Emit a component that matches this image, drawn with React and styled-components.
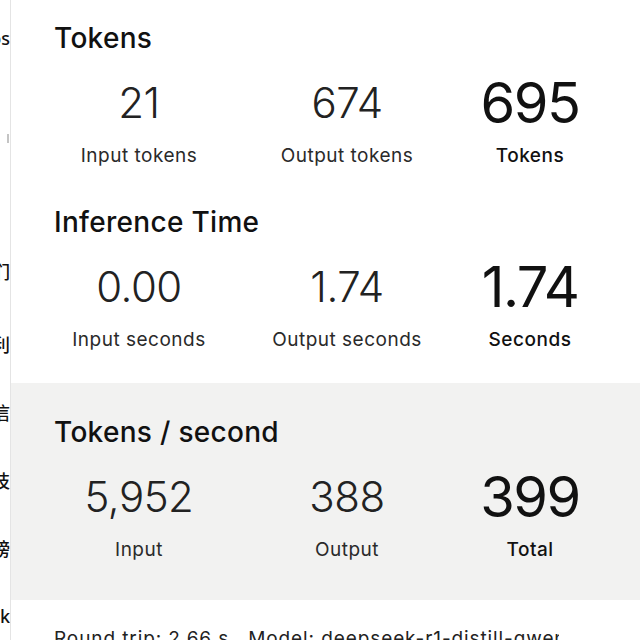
import React from 'react';
import styled, { createGlobalStyle } from 'styled-components';

const sections = [
  {
    title: 'Tokens',
    stats: [
      { value: '21', label: 'Input tokens' },
      { value: '674', label: 'Output tokens' },
      { value: '695', label: 'Tokens', total: true },
    ],
  },
  {
    title: 'Inference Time',
    stats: [
      { value: '0.00', label: 'Input seconds' },
      { value: '1.74', label: 'Output seconds' },
      { value: '1.74', label: 'Seconds', total: true },
    ],
  },
  {
    title: 'Tokens / second',
    shaded: true,
    stats: [
      { value: '5,952', label: 'Input' },
      { value: '388', label: 'Output' },
      { value: '399', label: 'Total', total: true },
    ],
  },
];

const navItems = [
  { text: 'Demos', gap: 28 },
  { text: '我们', gap: 119 },
  { text: '福利', gap: 53 },
  { text: '通信', gap: 48 },
  { text: '科技', gap: 48 },
  { text: '排行榜', gap: 48 },
  { text: 'Talk', gap: 47 },
];

function App() {
  return (
    <>
      <GlobalStyle />
      <Page>
        <Sidebar>
          <NavItem gap={navItems[0].gap}>{navItems[0].text}</NavItem>
          <NavMark />
          {navItems.slice(1).map((item) => (
            <NavItem key={item.text} gap={item.gap}>
              {item.text}
            </NavItem>
          ))}
        </Sidebar>
        <Panel>
          {sections.map((section) => (
            <Section key={section.title} shaded={section.shaded}>
              <Title>{section.title}</Title>
              <Stats>
                {section.stats.map((stat) => (
                  <Stat key={stat.label}>
                    <Value total={stat.total}>{stat.value}</Value>
                    <Label total={stat.total}>{stat.label}</Label>
                  </Stat>
                ))}
              </Stats>
            </Section>
          ))}
          <Footer>
            <span>Round trip: 2.66 s</span>
            <ModelName>Model: deepseek-r1-distill-qwen-7b</ModelName>
          </Footer>
        </Panel>
      </Page>
    </>
  );
}

const GlobalStyle = createGlobalStyle`
  html, body {
    margin: 0;
    padding: 0;
    background: #fff;
  }

  body {
    font-family: Inter, "Noto Sans", "Noto Sans CJK SC", sans-serif;
    color: #111;
    overflow: hidden;
  }
`;

const Page = styled.div`
  display: flex;
  height: 640px;
  overflow: hidden;
`;

const Sidebar = styled.nav`
  flex: 0 0 10px;
  display: flex;
  flex-direction: column;
  overflow: hidden;
  border-right: 1px solid #e4e4e4;
  font-family: "Noto Sans", "Noto Sans CJK SC", sans-serif;
  font-size: 18px;
  font-weight: 500;
  color: #111;
`;

const NavItem = styled.div`
  display: flex;
  justify-content: flex-end;
  height: 20px;
  line-height: 20px;
  margin-top: ${(p) => p.gap}px;
  white-space: nowrap;
`;

const NavMark = styled.div`
  align-self: flex-end;
  width: 2px;
  height: 9px;
  margin: 86px 1px 0 0;
  background: #c4c4c4;
`;

const Panel = styled.main`
  flex: 1;
  display: flex;
  flex-direction: column;
  min-width: 0;
`;

const Section = styled.section`
  padding: ${(p) => (p.shaded ? '32px 0 38px 43px' : '21px 0 16px 43px')};
  margin-top: ${(p) => (p.shaded ? '15px' : '0')};
  background: ${(p) => (p.shaded ? '#f2f2f1' : 'transparent')};
`;

const Title = styled.h2`
  margin: 0;
  font-size: 28px;
  line-height: 34px;
  font-weight: 500;
  letter-spacing: 0.3px;
  color: #111;
`;

const Stats = styled.div`
  display: grid;
  grid-template-columns: 170px 170px 120px;
  column-gap: 38px;
  margin-top: 23px;
`;

const Stat = styled.div`
  display: flex;
  flex-direction: column;
  align-items: center;
  gap: 16px;
`;

const Value = styled.div`
  height: 50px;
  line-height: 50px;
  font-size: ${(p) => (p.total ? '56px' : '42px')};
  font-weight: ${(p) => (p.total ? 400 : 300)};
  letter-spacing: ${(p) => (p.total ? '-1.5px' : '-0.5px')};
  color: ${(p) => (p.total ? '#111' : '#222')};
  white-space: nowrap;
`;

const Label = styled.div`
  font-size: 19px;
  line-height: 24px;
  font-weight: ${(p) => (p.total ? 500 : 400)};
  letter-spacing: 0.5px;
  color: ${(p) => (p.total ? '#111' : '#2a2a2a')};
  white-space: nowrap;
`;

const Footer = styled.footer`
  display: flex;
  gap: 19px;
  padding: 27px 0 0 43px;
  font-size: 19px;
  line-height: 24px;
  letter-spacing: 0.9px;
  color: #222;
  white-space: nowrap;
  overflow: hidden;
`;

const ModelName = styled.span`
  max-width: 311px;
  overflow: hidden;
`;

export default App;
